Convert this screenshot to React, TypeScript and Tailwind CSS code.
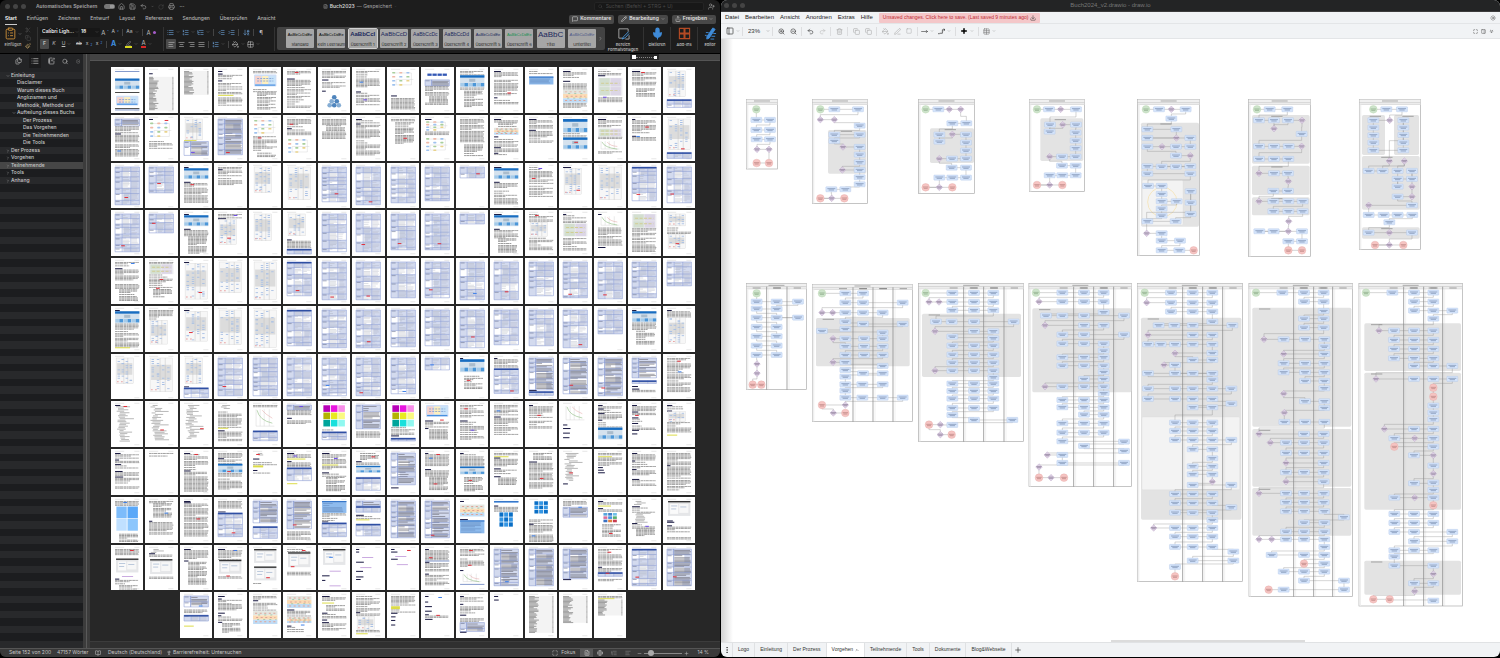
import type { ReactNode } from "react";
import {
  AlignCenter,
  AlignJustify,
  AlignLeft,
  AlignRight,
  ArrowDownAZ,
  BookOpen,
  ChevronDown,
  ChevronRight,
  ChevronUp,
  ChevronsDown,
  CircleX,
  ClipboardList,
  Copy,
  Download,
  EllipsisVertical,
  FileText,
  Files,
  Globe,
  Grid2X2,
  Home,
  IndentDecrease,
  IndentIncrease,
  List,
  ListOrdered,
  ListTree,
  Maximize,
  MessageSquare,
  Mic,
  Minus,
  MoveRight,
  NotebookPen,
  PaintBucket,
  Paintbrush,
  PanelLeft,
  PanelRight,
  Pencil,
  PenLine,
  PersonStanding,
  Plus,
  Printer,
  Redo2,
  RotateCw,
  Save,
  Scissors,
  Search,
  Share,
  Square,
  Sun,
  Table,
  Trash2,
  Undo2,
  UserPlus,
  ZoomIn,
  ZoomOut,
} from "lucide-react";

/* ---------- document pages ---------- */

// One string per page. Each token is a block kind and its height.
const PAGE_ROWS: string[][] = [
  [
    "a1 g6 b11 g2 k1 g2 e10 g2 k1 a1",
    "g2 h1 g2 c34",
    "c24",
    "h1 g1 h1 t4 g1 h1 g1 t4 g1 t6 y1 g1 t8",
    "t2 g1 e12 g2 t3 i17",
    "t5 r g2 h1 t28",
    "t7 g1 h1 g1 t6 g2 h1 g3 z12",
    "t18 u g2 h1 t12 v",
    "f17 g7 h1 g1 t12",
    "g2 A3 g3 D6 t10 i6 t3",
    "t4 b12 t3 i16",
    "h1 t6 g1 t16 r g1 h1 g1 t4",
    "t3 g2 Q8",
    "h1 t7 g1 h1 g1 t6 o13 t5",
    "t4 h1 g1 n18 g1 t5 v",
    "h1 t8 r g1 t4 g2 i8",
    "s26 g2 H8",
  ],
  [
    "D7 t7 h1 t8 g1 t12 u",
    "h1 r g1 f18 g1 t8",
    "s21 y1 D14 v",
    "D36 r",
    "f17 t10 r t6 i4",
    "t9 h1 r t6 g2 f17",
    "t6 i6 t8",
    "h1 t3 h1 t14 g1 t15",
    "t3 i22 r",
    "h1 f11 t4 g1 f16",
    "t24 g1 i12",
    "h1 t2 i5 o7 g1 h1 g1 t8 h1 t4 h1 t2",
    "h1 t8 g1 h1 t12",
    "b14 t4 b12 r",
    "h1 t8 n8 t3 x11 t3",
    "h1 t14 r g1 h1 t4 u",
    "s31 g2 H6 r",
  ],
  [
    "T38 r",
    "T26 r",
    "h1 b11 g2 h1 t6 r t14",
    "t2 h1 t6 g1 t8",
    "s26",
    "s33",
    "T35 r",
    "T38 r",
    "T36",
    "T34",
    "T11 r",
    "h1 b11 g2 h1 t6 g1 t14",
    "t5 v t12 r g1 t12",
    "h1 s26 r",
    "s33",
    "H34 r",
    "T36 r",
    "T38",
  ],
  [
    "T38 r",
    "T19 r",
    "h1 b11 g2 h1 t6 i18",
    "t4 v h1 s25 r",
    "s27",
    "s22 g3 h1 t8 H5",
    "T38",
    "T38 r",
    "T36 r",
    "T36 r",
    "T10",
    "h1 b11 g2 h1 t8 i14",
    "t8 r s14 g1 t13",
    "h1 t8 n13 g1 t12",
    "h1 x12 t18 g1 h1",
    "n14 t8 g1 t14",
    "s12 g1 t7 s14 r",
  ],
  [
    "t6 u h1 t12 g2 t5 i12",
    "t2 n10 t8 r t6 i9 r",
    "h1 s36 r",
    "s31",
    "s38",
    "H34 r",
    "T38 r",
    "T38 r",
    "T36",
    "T36 r",
    "T38 u",
    "T38 r",
    "T34",
    "T36 r",
    "T37 r",
    "T36",
    "T24",
  ],
  [
    "h1 b12 t6 g1 t16 y1",
    "t10 s24",
    "h1 s30 r",
    "s35",
    "s38",
    "H36",
    "T38",
    "T38 r",
    "T37",
    "T36",
    "T38 r",
    "T35",
    "T36",
    "T38 r",
    "T24",
    "h1 b11 t8 i14",
    "h1 t6 s26",
  ],
  [
    "s26",
    "s34",
    "s26 g2 h1 H10",
    "T38 r",
    "T38",
    "T38",
    "T38 u",
    "T38 r",
    "T36 u",
    "T12 u",
    "h1 b13 g3 i14 r",
    "h1 t9 H25 r",
    "D32 h1 H4",
    "D36 r",
    "D38 r",
    "D20 g2 H3 g2 h1 g1 h1 t3",
    "t12 r t10 u t12",
  ],
  [
    "h1 r l36",
    "l36 r",
    "l34 r",
    "l4 g2 t16 y1 g1 h1 t10",
    "t3 x20 g2 H10",
    "D5 t5 v g2 h1 g1 t4",
    "m22 g2 t2 H8",
    "D24 g2 t6",
    "m22 t8 h1 g1 H3",
    "e12 g3 h1 t6 r h1 i10",
    "t14 r g1 h1 t18 v",
    "t10 u g1 h1 t18",
    "h1 t12 r g2 t8",
    "x17 g2 h1 g2 h1 g3 h1 g3 h1",
    "h1 t2 h1 t3 h1 t5 h1 g1 t5 b12",
    "h1 t5 h1 t3 g1 h1 t4 r h1 g1 t4 h1 g2 h1",
    "h1 t4 h1 s10 t10 g2 y1",
  ],
  [
    "h1 t5 h1 t3 h1 t3 g2 h1 t4 h1 t6 g2 t2",
    "t1 g1 t1",
    "h1 r t16 h1 t20",
    "t5 h1 t4 b9 t4 r g1 t12",
    "l3 r g2 h1 g2 t3 y2 g2 h1 g1 t2",
    "h1 t4 y1 g1 h1 v t5 H13 g2 y1",
    "h1 t10 v y1 t5 g1 h1 t3 i14",
    "i8 r h1 t3 b7 g4 H13",
    "D32 g2 h1",
    "h1 t8 r t4 u g2 h1 t6 i14 r",
    "h1 t12 b8 g2 i14 r",
    "t3 y1 h1 t8 g1 h1 t4 g2 h1 i8",
    "i7 g1 h1 t18 r g1 t6",
    "l28 r g2 h1",
    "t3 y1 t8 g1 h1 g1 h1 g1 h1",
    "h1 t6 h1 t7 h1 t6 g2 h1 t6",
    "t12 h1 t12 g1 t10",
  ],
  [
    "t5 u q25 g2 i8",
    "t2 i15 u g2 h1 t4 t8",
    "h1 h1 t18 r g1 t14",
    "t8 g2 h1 H24 r",
    "D22 g3 H12",
    "D28 r g2 t8",
    "Q12 t8 h1 H14",
    "D5 H6 g2 h1 t3 y1 g3 H12",
    "D37",
    "D37 r",
    "h1 g2 o12 g2 h1 Q13",
    "Q2 g2 h1 t5 q15",
    "q13 g5 t4 h1 t8 g1 t7 u",
    "t6 D10 u",
    "h1 t3 y1 g1 h1 t3 d10 g1 i12 r",
    "l5 h1 t5 l10 h1 t4 i8 v",
    "w15 g4 h1 h1 g2 h1 t6 g4 t3",
  ],
  [
    "t7 r g2 w14 g3 p1 g1 h1 t5 i5",
    "l4 h1 t2 g2 w15 g2 t2",
    "h1 t10 h1 i23",
    "h1 r t5 u t4 w14 g2 t3 r",
    "w14 g3 w14 g2 t2 r",
    "t3 r w15 g4 t4 r",
    "w16 g3 u g2 p1 g3 h1 g3 h1 g4 p1",
    "h1 g1 h1 g4 p1 g3 h1 g4 p1 g2 h1 g4 h1 g1 h1",
    "h1 g1 h1 r g3 p1 g1 h1 g4 p1",
    "h1 t10 a1 h1 r t8 g2 h1 t10",
    "t8 r g1 t9 r g2 h1 g1 x11 a1",
    "D37 u",
    "D37",
    "D30 h1",
    "t8 r t8 g1 h1 t4 H4 g2 t3 r",
    "H37 r",
    "D37 r",
  ],
  [
    "D11 g2 t4 u g1 H6 g4 y1",
    "h1 g1 h1 t4 t6 g2 h1 g1 h1 t5 h1 i10",
    "t4 h1 g1 t8 o13",
    "o12 g1 h1 t6 o6 g2 h1 t6 u",
    "h1 t5 y1 g1 i6 g1 h1 t4 g1 h1 g1 h1 t8",
    "t16 h1 t3 s13 t3 y1",
    "t10 y3 t3 h1 g2 h1 g2 h1 g3 h1",
    "h1 g4 h1 u g3 h1 g3 h1 g2 h1 t3 r h1",
    "h1 t4 g2 h1 g1 t8 h1 g2 t4 D9 h1",
    "h1 g2 h1",
    "c37",
    "c27",
    "t2 y1 c16",
  ],
];

function random(seed: number) {
  let s = seed * 7919 + 13;
  return () => {
    s = (s * 16807) % 2147483647;
    return s / 2147483647;
  };
}

function textLines(x: number, y: number, w: number, h: number, rnd: () => number) {
  let d = "";
  let ly = y + 0.5;
  while (ly < y + h) {
    const last = rnd() > 0.78;
    const end = last ? w * (0.3 + rnd() * 0.5) : w - rnd() * 1.5;
    d += `M${x} ${ly.toFixed(2)}h${end.toFixed(1)}`;
    ly += last ? 2.1 : 1.3;
  }
  return d;
}

const PASTELS = ["#a9cf9c", "#9fc2ee", "#e9d38c", "#9fc2ee", "#f0b9a8"];
const BRIGHTS = ["#b800b8", "#e815e0", "#f78ee8", "#b3b300", "#e8ea20", "#fafa80", "#00a59b", "#18e0dc", "#90f8f0"];
const DOTS = ["#57a6dd", "#3f7fc8", "#6fc0e8", "#d86f9c", "#4690e0", "#58b070", "#3a70c0", "#e08040", "#c83c50"];

function block(kind: string, y: number, h: number, rnd: () => number, key: number): ReactNode {
  const cells = (cols: number, rows: number, pick: (i: number) => string, x = 5, w = 22) =>
    Array.from({ length: cols * rows }, (_, i) => (
      <rect
        key={i}
        x={x + (i % cols) * (w / cols) + 0.3}
        y={y + Math.floor(i / cols) * (h / rows) + 0.3}
        width={w / cols - 0.8}
        height={h / rows - 0.7}
        fill={pick(i)}
      />
    ));

  switch (kind) {
    case "t":
      return <path key={key} d={textLines(4, y, 24, h, rnd)} stroke="#6f6f6f" strokeWidth=".65" strokeDasharray="2.600 .4 1.500 .3 3.200 .5" />;
    case "i":
      return <path key={key} d={textLines(8, y, 19, h, rnd)} stroke="#666" strokeWidth=".65" strokeDasharray="1.800 .4 3 .4" />;
    case "l": {
      let d = "";
      for (let ly = y + 0.5; ly < y + h; ly += 1.5) {
        d += `M${(5 + rnd() * 5).toFixed(1)} ${ly}h${(4 + rnd() * 10).toFixed(1)}`;
      }
      return <path key={key} d={d} stroke="#888" strokeWidth=".6" />;
    }
    case "c": {
      let d = "";
      for (let ly = y + 0.5; ly < y + h; ly += 1.25) d += `M4 ${ly.toFixed(2)}h${(4 + rnd() * 6).toFixed(1)}M27 ${ly.toFixed(2)}h1`;
      return (
        <g key={key}>
          <rect x="4" y={y} width="24" height={h} fill="#f3f3f3" />
          <path d={d} stroke="#666" strokeWidth=".6" />
        </g>
      );
    }
    case "h":
      return <rect key={key} x="4" y={y} width={3 + rnd() * 5} height="1" fill="#16163f" />;
    case "k":
      return <rect key={key} x="4" y={y} width="24" height=".9" fill="#333" />;
    case "a":
      return <rect key={key} x="4" y={y} width="24" height="1" fill="#8399cb" />;
    case "p":
      return <rect key={key} x={8 + rnd() * 4} y={y} width="11" height=".8" fill="#bd95d8" />;
    case "y":
      return <rect key={key} x="4" y={y} width={8 + rnd() * 12} height={h} fill="#dcdc48" />;
    case "A":
      return <g key={key}>{cells(4, 1, () => "#3257b5", 6, 20)}</g>;
    case "b":
      return (
        <g key={key}>
          <rect x="4" y={y} width="24" height={h} fill="#d5e2ee" />
          <rect x="4" y={y} width="24" height={h * 0.2} fill="#186dc1" />
          <rect x="13" y={y + h * 0.3} width="6" height={h * 0.25} fill="#aabccc" />
          {[0, 1, 2, 3, 4, 5].map((i) => (
            <rect key={i} x={4.3 + i * 4} y={y + h * 0.65} width="3.5" height={h * 0.28} fill={i % 2 ? "#4c97d8" : "#a5cbea"} />
          ))}
        </g>
      );
    case "e":
      return (
        <g key={key}>
          <rect x="5" y={y} width="22" height={h} rx="1" fill="#cfdff7" />
          {["#f6d3cd", "#fff0bd", "#c8e4fa"].map((c, i) => (
            <rect key={c} x={6 + i * 7} y={y + 1.5} width="6" height={h - 4} fill={c} />
          ))}
          <path d={`M8 ${y + 4}h16M8 ${y + 6.5}h16`} stroke="#7a9ad0" strokeDasharray="2 1" strokeWidth=".8" />
          <rect x="6" y={y + h - 2} width="20" height="1.2" fill="#4690e0" />
        </g>
      );
    case "z":
      return (
        <g key={key}>
          {[[16, 2], [13.5, 6], [18.5, 6], [11.5, 10], [16, 10], [20.5, 10]].map(([cx, cy], i) => (
            <circle key={i} cx={cx} cy={y + cy} r="2.3" fill={i % 2 ? "#85add4" : "#4f85bd"} />
          ))}
        </g>
      );
    case "f":
      return (
        <g key={key}>
          <path d={`M7 ${y + 2}H24V${y + h - 3}H9V${y + h / 2}H26`} stroke="#cfcfcf" strokeWidth=".4" />
          {Array.from({ length: 11 }, (_, i) => (
            <rect
              key={i}
              x={5 + ((i * 7) % 21)}
              y={y + 1 + (i % 4) * (h / 4.2)}
              width="3.2"
              height="1.6"
              rx=".7"
              fill={PASTELS[i % 5]}
            />
          ))}
        </g>
      );
    case "s": {
      const w = h > 28 ? 22 : 17;
      return (
        <g key={key}>
          <rect x="5" y={y} width={w} height={h} fill="#f7f7f7" stroke="#c9c9c9" strokeWidth=".3" />
          <rect x="6" y={y + h * 0.2} width={w - 2} height={h * 0.45} fill="#dcdcdc" />
          <path d={`M${5 + w * 0.45} ${y}v${h}M${5 + w * 0.68} ${y}v${h}`} stroke="#bbb" strokeWidth=".4" />
          {Array.from({ length: Math.floor(h * 0.9) }, (_, i) => (
            <rect
              key={i}
              x={6.5 + Math.floor(rnd() * 4) * (w / 4.3)}
              y={y + 1 + Math.floor(i / 2) * 2.1}
              width="2.4"
              height=".9"
              fill="#a9c0e4"
            />
          ))}
          <path d={`M6 ${y + h - 2}h1.500M10 ${y + h - 2}h1.500`} stroke="#e79a9a" strokeWidth="1" />
        </g>
      );
    }
    case "n":
      return (
        <g key={key}>
          <rect x="4" y={y} width="24" height={h} fill="#ececf0" />
          {cells(2, 2, (i) => (i % 2 ? "#dcd6e6" : "#d3dfd0"), 5, 22)}
          <path d={`M7 ${y + h * 0.3}h18M7 ${y + h * 0.7}h18`} stroke="#d2cd92" strokeDasharray="3 1.400" />
        </g>
      );
    case "o":
      return (
        <g key={key}>
          {["#e3e6e0", "#fbdcb6", "#bfdcf6"].map((c, i) => (
            <rect key={c} x="4" y={y + (i * h) / 3} width="24" height={h / 3} fill={c} />
          ))}
          <path d={`M6 ${y + h * 0.17}h20M7 ${y + h * 0.5}h19M6 ${y + h * 0.83}h20`} stroke="#dfa396" strokeDasharray="2 2.500" />
          <path d={`M9 ${y + h * 0.3}h17M8 ${y + h * 0.65}h19`} stroke="#98c4a3" strokeDasharray="2 4" strokeWidth=".8" />
        </g>
      );
    case "x":
      return (
        <g key={key}>
          <path d={`M7 ${y + 1}v${h - 3}h18M11 ${y + 1}v${h - 3}M15 ${y + 1}v${h - 3}M20 ${y + 1}v${h - 3}`} stroke="#ccc" strokeWidth=".4" />
          <path d={`M8 ${y + 2}q2 ${h * 0.5} 15 ${h * 0.65}`} stroke="#8fbe84" strokeWidth=".6" />
          <path d={`M13 ${y + 2}q3 4 10 ${h * 0.4}`} stroke="#e3a3a3" strokeWidth=".5" />
        </g>
      );
    case "m":
      return <g key={key}>{cells(3, 3, (i) => BRIGHTS[i])}</g>;
    case "d":
      return <g key={key}>{cells(3, 3, (i) => DOTS[i], 9, 14)}</g>;
    case "q":
      return (
        <g key={key}>
          {h > 20
            ? cells(2, 2, (i) => ["#7dbcfb", "#5aa8f8", "#c0e0ff", "#8cc6fc"][i])
            : cells(3, 3, (i) => (i % 2 ? "#3496e4" : "#0a6fc6"), 9, 14)}
        </g>
      );
    case "w":
      return (
        <g key={key}>
          <rect x="5" y={y} width="22" height={h} fill="#e5e6e8" />
          <rect x="5" y={y} width="22" height="1.4" fill="#333" />
          <rect x="7" y={y + 3} width="8" height={h - 5} fill="#fafafa" />
          <rect x="16" y={y + 3} width="9" height={h - 6} fill="#f7f7f7" />
          <path d={`M8 ${y + 5}h6M17 ${y + 6}h6M8 ${y + 8}h5`} stroke="#9fb3cf" strokeWidth=".7" />
        </g>
      );
    case "Q":
      return (
        <g key={key}>
          <rect x="4" y={y} width="24" height={h} fill="#8ebbed" />
          <rect x="4" y={y} width="24" height="1.2" fill="#3676c8" />
          <path d={textLines(5, y + 2, 20, h - 3, rnd)} stroke="#5377a8" strokeWidth=".4" />
        </g>
      );
    case "T":
    case "D":
    case "H": {
      const dense = kind === "D";
      const c1 = dense ? 10.5 : 11;
      const c2 = dense ? 10.5 : 19.5;
      const rows: number[] = [y];
      for (let ry = y + 4 + rnd() * 3; ry < y + h - 2; ry += 3.5 + rnd() * 5) rows.push(ry);
      return (
        <g key={key}>
          <rect x="4" y={y} width="24" height={h} fill="#d3daee" />
          {rows.map((ry, i) => {
            if (i % 2 === 0) return null;
            const next = rows[i + 1] ?? y + h;
            return <rect key={ry} x={rnd() > 0.5 ? 4 : c1} y={ry} width={rnd() > 0.4 ? 17 : 8.5} height={next - ry} fill="#fff" />;
          })}
          <path
            d={textLines(c1 + 0.6, y + 1, dense ? 16.5 : 7.5, h - 1.5, rnd)}
            stroke={dense ? "#65656f" : "#a9adbb"}
            strokeWidth={dense ? ".6" : ".4"}
          />
          {!dense && <path d={textLines(c2 + 0.6, y + 1, 7, h - 1.5, rnd)} stroke="#b4b7c5" strokeWidth=".4" />}
          <path
            d={rows.map((ry) => `M4 ${ry}h24`).join("") + `M${c1} ${y}v${h}M${c2} ${y}v${h}M4 ${y + h}h24M4 ${y}v${h}M28 ${y}v${h}`}
            stroke="#8496d0"
            strokeWidth=".5"
          />
          <path d={rows.map((ry) => `M4.500 ${ry + 1}h4`).join("")} stroke="#6d7796" strokeWidth=".6" />
          {kind === "H" && <rect x="4" y={y} width="24" height="1.5" fill="#2f4fa3" />}
        </g>
      );
    }
    default:
      return null;
  }
}

const MARKS: Record<string, string> = { r: "#e0303a", u: "#3d80ea", v: "#6d4be8" };

function PageThumb({ spec, index }: { spec: string; index: number }) {
  const rnd = random(index + 1);
  let y = 4;
  const blocks: ReactNode[] = [];
  const marks: ReactNode[] = [];

  spec.split(" ").forEach((token, i) => {
    const kind = token[0];
    const h = Number(token.slice(1)) || 0;
    if (MARKS[kind]) {
      const my = Math.max(5, y - 3 - rnd() * 9);
      marks.push(<rect key={i} x={6 + rnd() * 14} y={my} width="3.6" height="1" fill={MARKS[kind]} />);
      return;
    }
    blocks.push(block(kind, y, h, rnd, i));
    y += h + 0.3;
  });

  return (
    <svg
      viewBox="0 0 32 46"
      preserveAspectRatio="none"
      className="h-full w-full min-w-0 bg-white"
      fill="none"
      aria-label={`Seite ${index + 1}`}
    >
      <path d="M4 2.300h9M23 2.300h5M23 44h5" stroke="#d5d5d5" strokeWidth=".6" />
      {blocks}
      {marks}
    </svg>
  );
}

/* ---------- draw.io diagrams ---------- */

interface Diagram {
  // canvas offset
  offset: [number, number];
  // x1 y1 x2 y2
  frame: [number, number, number, number];
  lanes?: number[];
  groups?: number[][];
  light?: number[][];
  ring?: boolean;
  // plain pairs are process boxes; g = start, d = decision, r = end
  nodes: string;
}

// Coordinates are in a third of a canvas pixel.
const DIAGRAMS: Diagram[] = [
  {
    offset: [-3, -114],
    frame: [79, 295, 173, 504],
    nodes: "g109,325 109,357 150,357 109,387 150,387 110,415 150,415 d111,445 d147,445 r147,486 r110,486",
  },
  {
    offset: [-3, -114],
    frame: [277, 295, 443, 608],
    groups: [[324, 387, 115, 131]],
    nodes:
      "g301,325 343,325 414,325 d301,356 d343,356 419,374 343,401 419,401 343,420 d369,438 419,438 419,461 419,484 d367,507 419,507 419,529 419,550 376,565 334,565 d335,592 r301,592 r373,592",
  },
  {
    offset: [-3, -114],
    frame: [596, 295, 763, 577],
    groups: [[630, 382, 132, 104]],
    nodes:
      "g617,325 655,325 d688,325 d722,325 739,367 697,367 658,401 658,422 d697,400 738,401 738,425 738,449 738,473 696,473 d658,473 695,500 738,500 738,530 697,530 658,530 d658,559 r617,559 r697,559",
  },
  {
    offset: [-3, -114],
    frame: [928, 295, 1094, 572],
    groups: [[961, 352, 129, 128]],
    nodes:
      "g951,325 987,325 d1022,325 1068,325 990,371 989,392 d1028,371 1068,371 1067,395 1067,419 1067,442 1067,467 1026,467 d989,467 1026,494 1067,494 1067,523 1027,523 989,523 d989,552 r951,552 r1027,552",
  },
  {
    offset: [1137, -114],
    frame: [113, 295, 299, 764],
    groups: [[123, 365, 174, 312]],
    light: [[127, 537, 122, 135]],
    ring: true,
    nodes:
      "g138,325 177,325 d214,325 257,325 214,353 142,385 229,385 d229,411 142,411 271,411 271,437 228,437 d186,437 142,437 228,464 d271,464 185,497 228,497 271,496 142,496 142,518 271,518 144,555 185,555 185,579 185,601 230,601 185,623 185,644 142,661 227,661 272,639 272,605 272,571 d140,697 185,697 185,719 240,719 185,748 238,748 r281,748",
  },
  {
    offset: [1137, -114],
    frame: [446, 295, 632, 767],
    groups: [[456, 342, 173, 146], [456, 494, 173, 88], [456, 589, 173, 54]],
    nodes:
      "g471,325 509,325 562,325 477,358 522,358 d522,383 564,358 d606,358 605,399 477,436 522,436 566,436 d605,436 477,474 522,474 565,474 d477,517 522,517 564,517 d565,541 564,570 520,570 d477,601 520,601 565,601 608,601 520,631 565,631 608,631 d566,661 d565,691 521,691 478,691 606,691 606,721 565,721 r565,748 r606,748",
  },
  {
    offset: [1137, -114],
    frame: [778, 295, 962, 746],
    groups: [[786, 342, 69, 120], [882, 342, 75, 120], [786, 465, 173, 161], [786, 679, 173, 34]],
    nodes:
      "g820,325 859,325 906,325 d869,358 820,358 820,380 820,403 820,425 820,448 910,448 910,425 910,402 910,380 910,358 d868,480 806,510 848,510 d913,480 893,510 893,534 893,557 936,510 936,534 d936,557 d936,587 893,587 936,613 d806,613 806,642 851,642 893,642 937,642 868,664 806,695 d868,695 936,695 d868,732 r825,732 r910,732",
  },
  {
    offset: [-3, 696],
    frame: [79, 38, 260, 356],
    lanes: [140, 201],
    nodes:
      "g110,67 110,92 170,92 234,92 170,114 110,113 170,140 234,140 110,140 170,168 110,168 170,196 110,196 170,224 110,224 170,252 110,252 d111,279 d111,307 r98,341 r124,341",
  },
  {
    offset: [-3, 696],
    frame: [277, 40, 578, 452],
    lanes: [399, 459, 519],
    groups: [[288, 141, 281, 145]],
    nodes:
      "g306,67 376,67 429,67 376,95 429,95 548,95 d306,125 d338,125 376,125 429,125 488,125 376,152 429,159 548,159 376,174 306,180 488,185 488,203 432,203 376,203 d339,203 376,226 432,226 488,226 376,252 432,252 488,252 d339,274 376,274 488,285 376,297 429,307 488,307 376,317 376,340 427,340 488,340 376,359 376,380 427,380 488,380 548,380 d376,402 r306,402 d340,426 r376,426",
  },
  {
    offset: [-3, 696],
    frame: [596, 38, 911, 512],
    lanes: [731, 791, 852],
    groups: [[606, 128, 297, 190]],
    nodes:
      "g617,66 697,66 762,66 820,66 d627,93 d657,93 697,93 762,93 820,93 697,118 762,118 820,118 648,152 695,152 762,152 881,152 d645,181 762,181 820,181 697,197 820,202 697,224 762,224 820,224 697,251 762,251 820,251 697,275 762,275 820,275 d645,299 697,299 762,299 820,299 820,319 697,338 762,338 820,338 697,360 762,360 820,360 697,383 762,383 820,383 697,411 762,411 820,411 697,432 762,447 877,447 697,462 d661,461 r627,461 d661,491 r695,491",
  },
  {
    offset: [297, 696],
    frame: [627, 38, 935, 647],
    lanes: [761, 821, 881],
    groups: [[637, 112, 297, 252]],
    nodes:
      "g648,65 727,65 792,65 851,65 d657,92 727,92 792,92 851,92 851,124 678,134 727,134 792,134 912,134 d675,163 792,163 851,163 727,191 792,191 912,191 727,218 792,218 851,218 851,239 727,259 792,259 851,259 727,284 792,284 851,284 851,303 792,324 851,324 d675,347 727,347 792,347 851,347 851,367 727,387 792,387 851,387 727,409 792,409 851,409 792,431 851,431 727,457 792,457 851,457 727,485 792,485 851,485 727,511 912,512 792,525 912,540 d682,552 727,552 727,576 912,576 d657,588 r657,620 d693,620 r732,620",
  },
  {
    offset: [297, 696],
    frame: [952, 38, 1267, 932],
    lanes: [1088, 1148, 1208],
    groups: [[963, 140, 301, 606]],
    light: [[966, 438, 293, 218]],
    nodes:
      "g974,65 1053,65 1118,65 1177,65 d980,95 1053,95 1118,95 1177,95 1053,122 1118,122 1177,122 1177,152 1016,163 1063,163 1118,163 1237,163 d984,192 1118,192 1177,192 984,220 1022,220 1065,220 1118,220 1177,220 1177,246 d1065,247 1118,267 1177,267 d1032,282 1065,282 1065,307 1118,307 1177,307 984,307 1177,326 984,353 1065,353 1118,353 1177,353 1234,353 984,384 1065,384 1118,384 1177,384 1234,398 1118,409 1177,409 1065,455 1118,455 1177,455 1065,480 1118,480 1177,480 1065,507 1118,507 1177,507 1234,507 1118,535 1177,535 1177,562 1118,586 1177,586 1118,610 1177,610 d1177,632 1118,642 1234,642 1065,669 1118,669 1177,669 1065,696 1118,696 1177,696 1234,709 1065,725 1118,725 1177,725 1177,747 d1001,771 1065,771 1118,771 1177,771 1065,797 1118,797 1177,797 1065,828 1118,828 1177,828 1240,842 1118,869 1240,869 1065,888 r1065,916",
  },
  {
    offset: [1557, 696],
    frame: [27, 38, 338, 977],
    lanes: [161, 221, 278],
    groups: [[37, 110, 297, 357], [37, 474, 297, 173], [37, 651, 297, 143]],
    nodes:
      "g48,65 127,65 192,65 251,65 192,92 251,92 251,120 192,143 251,143 192,170 251,170 d72,205 131,205 195,205 253,205 253,227 d131,249 253,249 131,277 195,277 253,277 131,304 195,304 253,304 195,330 253,330 253,352 d131,368 195,391 253,391 253,411 d133,425 133,453 195,453 253,453 d57,489 192,489 251,489 d91,515 138,515 192,515 251,515 138,546 192,546 251,546 d138,576 251,576 138,604 192,604 251,604 d138,632 251,632 d57,667 138,667 192,667 251,667 138,694 192,694 251,694 138,721 192,721 253,721 312,739 192,755 253,755 138,782 192,782 253,782 d57,805 d95,805 138,805 192,805 253,805 253,828 95,852 192,852 253,852 r192,878 253,878 131,902 192,902 253,902 192,929 312,929 312,956 131,956 r86,956",
  },
  {
    offset: [1557, 696],
    frame: [357, 38, 667, 1005],
    lanes: [491, 551, 608],
    groups: [[373, 157, 290, 143], [373, 305, 290, 411], [373, 869, 290, 102]],
    nodes:
      "g378,65 457,65 522,65 580,65 522,92 580,92 522,119 580,119 637,119 580,143 d417,179 462,179 522,179 580,179 462,207 522,207 580,207 462,234 522,234 580,234 462,262 522,262 580,262 522,285 580,285 637,285 d408,324 522,324 580,324 637,324 r580,350 r580,377 580,404 580,425 580,445 d433,474 522,474 580,474 463,502 d524,502 580,502 r463,527 580,527 522,553 d580,553 580,584 d580,608 522,637 580,635 580,657 463,680 d524,680 580,680 r580,703 463,729 522,729 580,729 463,756 522,756 580,756 463,783 522,783 637,783 522,811 637,811 463,838 522,838 580,838 463,857 463,884 580,884 d580,909 522,937 580,937 d524,961 r400,985 r449,985 580,989",
  },
];

function DiagramSheet({ diagram }: { diagram: Diagram }) {
  const [x1, y1, x2, y2] = diagram.frame;
  const [tx, ty] = diagram.offset;
  const w = x2 - x1;
  const nodes = diagram.nodes.split(" ").map((n) => {
    const kind = /^[gdr]/.test(n) ? n[0] : "b";
    const [x, y] = n.replace(/^[gdr]/, "").split(",").map(Number);
    return { kind, x, y };
  });
  const edges = nodes
    .slice(1)
    .map((n, i) => {
      const p = nodes[i];
      if (Math.abs(p.y - n.y) < 4) return `M${p.x} ${p.y}H${n.x}`;
      const mid = Math.round((p.y + n.y) / 2);
      return `M${p.x} ${p.y}V${mid}H${n.x}V${n.y}`;
    })
    .join("");

  return (
    <g transform={`scale(.33333) translate(${tx} ${ty})`}>
      <rect x={x1} y={y1} width={w} height={y2 - y1} fill="#fff" stroke="#a8a8a8" strokeWidth="2" />
      <rect x={x1} y={y1} width={w} height="9" fill="#f0f0f0" stroke="#bbb" />
      <rect x={x1} y={y1 + 9} width={w} height="7" fill="#ececec" stroke="#bbb" />
      <rect x={x1 + 1} y={y1 + 16} width="5" height={y2 - y1 - 17} fill="#efefef" />
      <path d={`M${x1 + w / 2 - 24} ${y1 + 5}h48`} stroke="#888" strokeWidth="2" />
      {diagram.groups?.map((g, i) => (
        <g key={i}>
          <rect x={g[0]} y={g[1]} width={g[2]} height={g[3]} rx="5" fill="#e3e3e3" />
          <path d={`M${g[0] + (g[2] > 200 ? 20 : g[2] / 3)} ${g[1] + 4}h34`} stroke="#777" strokeWidth="1.8" />
        </g>
      ))}
      {diagram.light?.map((g, i) => (
        <rect key={i} x={g[0]} y={g[1]} width={g[2]} height={g[3]} rx="4" fill="#f3f3f3" stroke="#ddd" />
      ))}
      {diagram.lanes?.map((lane) => (
        <g key={lane}>
          <path d={`M${lane + 6} ${y1 + 14}V${y2}`} stroke="#d8d8d8" strokeWidth="1" />
          <path d={`M${lane} ${y1 + 9}V${y2}`} stroke="#858585" strokeWidth="2.2" />
          <path d={`M${lane - 42} ${y1 + 13}h24M${lane + 20} ${y1 + 13}h22`} stroke="#777" strokeWidth="2" />
        </g>
      ))}
      {diagram.ring && <circle cx="187" cy="603" r="44" stroke="#f5e6c0" strokeWidth="3" />}
      <path d={edges} stroke="#8a8a8a" strokeWidth="1.1" />
      {nodes.map((n, i) => {
        if (n.kind === "d") {
          return (
            <g key={i}>
              <path d={`M${n.x} ${n.y - 10}l10 10l-10 10l-10-10z`} fill="#dccfe4" stroke="#b29abf" />
              <path d={`M${n.x - 8} ${n.y - 1.5}h16M${n.x - 6} ${n.y + 2}h12`} stroke="#6d5c78" strokeWidth="1.4" />
            </g>
          );
        }
        if (n.kind !== "b") {
          const green = n.kind === "g";
          return (
            <g key={i}>
              <circle cx={n.x} cy={n.y} r="11.5" fill={green ? "#cde3cb" : "#f6c4c2"} stroke={green ? "#b4d3a8" : "#e2a5a2"} />
              <path d={`M${n.x - 8} ${n.y - 1}h16M${n.x - 6} ${n.y + 3}h12`} stroke={green ? "#6f946a" : "#a06766"} strokeWidth="1.5" />
            </g>
          );
        }
        return (
          <g key={i}>
            <rect x={n.x - 16.5} y={n.y - 8} width="33" height="15.5" rx="2" fill="#d4e4fb" stroke="#a3bce2" strokeWidth=".9" />
            <path d={`M${n.x - 12} ${n.y - 2}h24M${n.x - 8} ${n.y + 2}h16`} stroke="#526a8e" strokeWidth="1.5" />
          </g>
        );
      })}
    </g>
  );
}

/* ---------- word processor ---------- */

const RIBBON_TABS = ["Start", "Einfügen", "Zeichnen", "Entwurf", "Layout", "Referenzen", "Sendungen", "Überprüfen", "Ansicht"];

const STYLES = [
  { name: "Standard", sample: "AaBbCcDdEe", cls: "text-[4px] text-black" },
  { name: "Kein Leerraum", sample: "AaBbCcDdEe", cls: "text-[4px] text-black" },
  { name: "Überschrift 1", sample: "AaBbCcI", cls: "text-[6px] font-bold text-[#20285c]" },
  { name: "Überschrift 2", sample: "AaBbCcD", cls: "text-[6px] text-[#20285c]" },
  { name: "Überschrift 3", sample: "AaBbCcDc", cls: "text-[5px] text-[#20285c]" },
  { name: "Überschrift 4", sample: "AaBbCcDd", cls: "text-[5px] text-[#20285c]" },
  { name: "Überschrift 5", sample: "AaBbCcDdEe", cls: "text-[4px] text-[#20285c]" },
  { name: "Überschrift 6", sample: "AaBbCcDdEe", cls: "text-[4px] text-[#1c8f50]" },
  { name: "Titel", sample: "AaBbC", cls: "text-[8px] text-[#20285c]" },
  { name: "Untertitel", sample: "AaBbCcDdEe", cls: "text-[4px] italic text-[#4a5588]" },
];

const OUTLINE: { label: string; level: number; open?: boolean; closed?: boolean }[] = [
  { label: "Einleitung", level: 0, open: true },
  { label: "Disclaimer", level: 1 },
  { label: "Warum dieses Buch", level: 1 },
  { label: "Anglizismen und", level: 1 },
  { label: "Methodik, Methode und", level: 1 },
  { label: "Aufteilung dieses Buchs", level: 1, open: true },
  { label: "Der Prozess", level: 2 },
  { label: "Das Vorgehen", level: 2 },
  { label: "Die Teilnehmenden", level: 2 },
  { label: "Die Tools", level: 2 },
  { label: "Der Prozess", level: 0, closed: true },
  { label: "Vorgehen", level: 0, closed: true },
  { label: "Teilnehmende", level: 0, closed: true },
  { label: "Tools", level: 0, closed: true },
  { label: "Anhang", level: 0, closed: true },
];

const LEVEL_PAD = ["pl-[6px]", "pl-[12px]", "pl-[18px]"];

function Lights({ className }: { className: string }) {
  return (
    <div className={`flex items-center gap-[3px] ${className}`}>
      <span className="size-[5px] rounded-full bg-[#444]" />
      <span className="size-[5px] rounded-full bg-[#444]" />
      <span className="size-[5px] rounded-full bg-[#444]" />
    </div>
  );
}

function Tool({ label, className = "w-[10px]", menu, children }: { label: string; className?: string; menu?: boolean; children: ReactNode }) {
  return (
    <button aria-label={label} className={`flex h-[10px] shrink-0 items-center justify-center gap-[2px] ${className}`}>
      {children}
      {menu && <ChevronDown className="size-[4px] text-[#8a8a8a]" />}
    </button>
  );
}

function Divider({ className = "h-[7px] bg-[#444]" }: { className?: string }) {
  return <span className={`mx-[2px] w-px shrink-0 ${className}`} />;
}

function WordTitleBar() {
  return (
    <div className="flex h-[13px] items-center text-[5px] text-[#a0a0a0]">
      <Lights className="ml-[5px] w-[31px]" />
      <label className="flex items-center gap-[7px] font-['Liberation_Sans',sans-serif] font-bold">
        Automatisches Speichern
        <input
          type="checkbox"
          className="h-[5px] w-[11px] appearance-none rounded-full bg-[#777] [background-image:radial-gradient(circle_at_8px_50%,#999_2px,transparent_2px)]"
        />
      </label>
      <div className="ml-[3px] flex items-center gap-[4px]">
        <Home className="size-[7px]" />
        <Save className="size-[7px]" />
        <Undo2 className="size-[7px]" />
        <ChevronDown className="size-[3px]" />
        <RotateCw className="size-[6px] text-[#4a4a4a]" />
        <Printer className="size-[7px]" />
        <span className="font-bold">···</span>
      </div>
      <div className="ml-auto mr-[197px] flex items-center gap-[2px]">
        <FileText className="size-[5px]" />
        <span className="font-semibold text-[#cfcfcf]">Buch2023</span>
        <span>— Gespeichert</span>
        <ChevronDown className="size-[3px] text-[#555]" />
      </div>
      <label className="mr-[4px] flex w-[110px] items-center gap-[3px] rounded-[2px] border border-[#242424] bg-[#181818] pl-[3px] text-[#484848]">
        <Search className="size-[5px]" />
        <input
          aria-label="Suchen"
          placeholder="Suchen (Befehl + STRG + U)"
          className="h-[7px] w-full bg-transparent p-0 outline-none placeholder:text-[#484848]"
        />
      </label>
      <UserPlus className="mr-[5px] size-[7px]" />
    </div>
  );
}

function RibbonTabs() {
  return (
    <div className="flex h-[12px] items-center pl-[5px] text-[5px] text-[#b4b4b4]">
      <div className="flex gap-[10px]">
        {RIBBON_TABS.map((tab, i) => (
          <button key={tab} className={i === 0 ? "h-[11px] border-b border-[#ccc] font-semibold text-white" : "h-[11px] border-b border-transparent font-medium"}>
            {tab}
          </button>
        ))}
      </div>
      <div className="ml-auto mr-[4px] flex gap-[4px] font-semibold text-[#e2e2e2]">
        <button className="flex h-[9px] items-center gap-[2px] rounded-[2px] bg-[#484848] px-[3px]">
          <MessageSquare className="size-[6px]" />
          Kommentare
        </button>
        <button className="flex h-[9px] items-center gap-[2px] rounded-[2px] bg-[#484848] px-[3px]">
          <Pencil className="size-[6px]" />
          Bearbeitung
          <ChevronDown className="size-[4px]" />
        </button>
        <button className="flex h-[9px] items-center gap-[2px] rounded-[2px] bg-[#484848] px-[3px]">
          <Share className="size-[6px]" />
          Freigeben
          <ChevronDown className="size-[4px]" />
        </button>
      </div>
    </div>
  );
}

function BigTool({ label, className, children }: { label: string; className: string; children: ReactNode }) {
  return (
    <button className={`flex h-[25px] flex-col items-center text-[4px] font-medium leading-[5px] text-[#c8c8c8] ${className}`}>
      {children}
      <span className="mt-[2px]">{label}</span>
    </button>
  );
}

function Ribbon() {
  return (
    <div className="flex h-[29px] items-start border-b border-black pt-[2px] text-[#bdbdbd]">
      <div className="flex w-[35px] pl-[4px]">
        <button className="flex flex-col items-center text-[4px] font-medium leading-[5px]">
          <span className="flex items-center gap-[1px]">
            <ClipboardList className="size-[13px] text-[#d6953a]" strokeWidth={1.6} />
            <ChevronDown className="size-[4px]" />
          </span>
          <span className="mt-[2px]">Einfügen</span>
        </button>
        <div className="ml-[3px] flex flex-col gap-[2px]">
          <Scissors className="size-[6px] text-[#4f4f4f]" />
          <Copy className="size-[6px] text-[#4f4f4f]" />
          <Paintbrush className="size-[6px] text-[#c6a86c]" />
        </div>
      </div>
      <Divider className="h-[24px] bg-[#333]" />

      <div className="flex w-[121px] flex-col gap-[2px] text-[5px]">
        <div className="flex items-center">
          <span className="flex w-[38px] items-center justify-between rounded-[1px] bg-[#171717] px-[2px]">
            <select aria-label="Schriftart" className="h-[9px] w-[33px] appearance-none bg-transparent p-0 font-semibold text-[#eee]">
              <option>Calibri Ligh...</option>
            </select>
            <ChevronDown className="size-[4px] shrink-0 text-[#777]" />
          </span>
          <span className="ml-[2px] flex w-[20px] items-center justify-between rounded-[1px] bg-[#171717] px-[1px]">
            <select aria-label="Schriftgrad" className="h-[9px] w-[12px] appearance-none bg-transparent p-0 font-semibold text-[#eee]">
              <option>18</option>
            </select>
            <ChevronDown className="size-[4px] shrink-0 text-[#777]" />
          </span>
          <Tool label="Schrift vergrößern"><span className="text-[6px]">A</span><sup className="text-[3px] text-[#4f9be8]">^</sup></Tool>
          <Tool label="Schrift verkleinern"><span className="text-[5px]">A</span><sup className="text-[3px] text-[#4f9be8]">v</sup></Tool>
          <Divider />
          <Tool label="Groß-/Kleinschreibung" className="w-[15px]" menu>Aa</Tool>
          <Divider />
          <Tool label="Formatierung löschen" className="w-[12px]"><span className="text-[6px]">A</span><span className="size-[3px] rounded-full bg-[#a55bc8]" /></Tool>
        </div>
        <div className="flex items-center">
          <Tool label="Fett" className="w-[9px] rounded-[1px] bg-[#4a4a4a] font-bold">F</Tool>
          <Tool label="Kursiv" className="w-[10px] italic">K</Tool>
          <Tool label="Unterstrichen" className="w-[15px]" menu><u>U</u></Tool>
          <Tool label="Durchgestrichen"><s>ab</s></Tool>
          <Tool label="Tiefgestellt"><span>x</span><sub className="text-[3px] text-[#4f9be8]">2</sub></Tool>
          <Tool label="Hochgestellt"><span>x</span><sup className="text-[3px] text-[#4f9be8]">2</sup></Tool>
          <Divider />
          <Tool label="Texteffekte" className="w-[15px]" menu><span className="text-[7px] font-bold text-[#3f8fe0]">A</span></Tool>
          <Tool label="Hervorheben" className="w-[15px]" menu><PenLine className="size-[7px] border-b-2 border-[#d9d920]" /></Tool>
          <Tool label="Schriftfarbe" className="w-[15px]" menu><span className="border-b-2 border-[#d82828] text-[6px] leading-[6px]">A</span></Tool>
        </div>
      </div>
      <Divider className="h-[24px] bg-[#333]" />

      <div className="flex w-[106px] flex-col gap-[2px]">
        <div className="flex items-center">
          <Tool label="Aufzählung" className="w-[15px]" menu><List className="size-[7px] text-[#6fa6dc]" /></Tool>
          <Tool label="Nummerierung" className="w-[15px]" menu><ListOrdered className="size-[7px] text-[#6fa6dc]" /></Tool>
          <Tool label="Liste mit mehreren Ebenen" className="w-[15px]" menu><ListTree className="size-[7px] text-[#6fa6dc]" /></Tool>
          <Divider />
          <Tool label="Einzug verkleinern"><IndentDecrease className="size-[7px] text-[#6fa6dc]" /></Tool>
          <Tool label="Einzug vergrößern"><IndentIncrease className="size-[7px] text-[#6fa6dc]" /></Tool>
          <Divider />
          <Tool label="Sortieren"><ArrowDownAZ className="size-[7px] text-[#6fa6dc]" /></Tool>
          <Divider />
          <Tool label="Absatzmarken"><span className="text-[6px]">¶</span></Tool>
        </div>
        <div className="flex items-center">
          <Tool label="Linksbündig" className="w-[10px] rounded-[1px] bg-[#4a4a4a]"><AlignLeft className="size-[7px]" /></Tool>
          <Tool label="Zentriert"><AlignCenter className="size-[7px]" /></Tool>
          <Tool label="Rechtsbündig"><AlignRight className="size-[7px]" /></Tool>
          <Tool label="Blocksatz"><AlignJustify className="size-[7px]" /></Tool>
          <Divider />
          <Tool label="Zeilenabstand" className="w-[15px]" menu><ListOrdered className="size-[7px] text-[#6fa6dc]" /></Tool>
          <Divider />
          <Tool label="Schattierung" className="w-[15px]" menu><PaintBucket className="size-[7px]" /></Tool>
          <Tool label="Rahmen" className="w-[15px]" menu><Grid2X2 className="size-[7px]" /></Tool>
        </div>
      </div>
      <Divider className="h-[24px] bg-[#333]" />

      <div className="flex h-[23px] min-w-0 flex-1 items-center rounded-[2px] bg-[#434343] pl-[9px]">
        <div className="flex flex-1 justify-between">
          {STYLES.map((style, i) => (
            <button
              key={style.name}
              className={`flex h-[19px] w-[28px] flex-col items-center justify-between rounded-[1px] bg-[#a6a6a6] pb-[1px] ${i === 2 ? "outline outline-[#d0d0d0]" : ""}`}
            >
              <span className={`flex h-[11px] items-center whitespace-nowrap font-['Liberation_Sans',sans-serif] ${style.cls}`}>{style.sample}</span>
              <span className="whitespace-nowrap text-[4px] leading-[5px] text-[#222]">{style.name}</span>
            </button>
          ))}
        </div>
        <ChevronRight className="mx-[2px] size-[5px]" />
      </div>

      <div className="flex">
        <BigTool label="Bereich Formatvorlagen" className="w-[36px]">
          <svg viewBox="0 0 14 14" className="size-[13px] shrink-0" fill="none">
            <path d="M2 2H12V5M2 2V12H6" stroke="#a8a8a8" />
            <path d="M12.500 5 7 10.500 5.500 13 9 11.500 13 7" stroke="#4c96d8" />
            <path d="M9 13H13V9" stroke="#a8a8a8" />
          </svg>
        </BigTool>
        <Divider className="h-[23px] bg-[#333]" />
        <BigTool label="Diktieren" className="w-[22px]">
          <Mic className="size-[13px] shrink-0 fill-[#3f8bd8] text-[#3f8bd8]" />
        </BigTool>
        <Divider className="h-[23px] bg-[#333]" />
        <BigTool label="Add-Ins" className="w-[22px]">
          <svg viewBox="0 0 14 14" className="size-[13px] shrink-0" fill="none" stroke="#b34a24" strokeWidth="1.2">
            <path d="M1.500 1.500h5v5h-5zM7.500 1.500h5v5h-5zM1.500 7.500h5v5h-5zM7.500 7.500h5v5h-5z" />
          </svg>
        </BigTool>
        <Divider className="h-[23px] bg-[#333]" />
        <BigTool label="Editor" className="w-[20px]">
          <svg viewBox="0 0 14 14" className="size-[13px] shrink-0" fill="none" stroke="#3f8bd8">
            <path d="M9.500 1 12 2.500 5.500 12 3 13 3.200 10.200z" fill="#3f8bd8" />
            <path d="M2 6h3M1 9h2M10 7h3M8 10h4M7 13h4" />
          </svg>
        </BigTool>
      </div>
    </div>
  );
}

function OutlinePane() {
  return (
    <aside className="flex w-[83px] shrink-0 flex-col bg-[#232426] text-[5px] font-medium text-[#c8c8c8]">
      <div className="flex h-[14px] items-center gap-[7px] pl-[15px]">
        <Files className="size-[8px]" />
        <span className="flex h-full items-center bg-[#1b1b1c] px-[2px]"><List className="size-[8px]" /></span>
        <NotebookPen className="size-[8px]" />
        <Search className="size-[7px]" />
        <CircleX className="ml-auto mr-[3px] size-[5px] text-[#888]" />
      </div>
      <ul className="mt-[4px] flex min-h-0 flex-1 flex-col">
        {Array.from({ length: 77 }, (_, i) => {
          const item = OUTLINE[i];
          const bg = i === 12 ? "bg-[#464646]" : i % 2 ? "bg-[#1c1d1f]" : "bg-[#28292b]";
          return (
            <li key={i} className={`min-h-0 flex-1 overflow-hidden ${bg}`}>
              {item && (
                <button className={`flex h-full items-center gap-[1px] whitespace-nowrap ${LEVEL_PAD[item.level]}`}>
                  <span className="w-[4px]">
                    {item.open && <ChevronDown className="size-[4px]" />}
                    {item.closed && <ChevronRight className="size-[4px]" />}
                  </span>
                  {item.label}
                </button>
              )}
            </li>
          );
        })}
      </ul>
    </aside>
  );
}

function DocumentArea() {
  return (
    <main className="flex min-w-0 flex-1 flex-col bg-[#272727]">
      <div className="flex h-[7px] shrink-0 justify-end border-b border-[#555] bg-[#434343] pr-[61px]">
        <div className="flex w-[29px] items-center bg-[#272727] px-[2px]">
          <span className="size-[4px] bg-white" />
          <span className="flex-1 border-t border-dotted border-[#888]" />
          <span className="size-[3px] bg-white" />
        </div>
      </div>
      <div className="grid min-h-0 flex-1 grid-cols-17 grid-rows-12 gap-[2px] pb-[3px] pl-[21px] pr-[25px] pt-[6px]">
        {PAGE_ROWS.map((row, r) =>
          row.slice(0, 17).map((spec, c) => (
            <div key={`${r}-${c}`} className={`min-h-0 min-w-0 ${r === 11 && c === 0 ? "col-start-3" : ""}`}>
              <PageThumb spec={spec} index={r * 17 + c} />
            </div>
          )),
        )}
      </div>
      <div className="h-[7px] shrink-0 border-t border-[#3c3c3c] bg-[#303030]" />
    </main>
  );
}

function WordStatusBar() {
  return (
    <footer className="flex h-[9px] shrink-0 items-center border-t border-[#555] bg-[#3a3a3a] pl-[9px] pr-[11px] text-[5px] text-[#c6c6c6]">
      <span className="w-[48px]">Seite 152 von 200</span>
      <span className="w-[38px]">47157 Wörter</span>
      <BookOpen className="mr-[7px] size-[6px]" />
      <span className="w-[58px] whitespace-nowrap">Deutsch (Deutschland)</span>
      <PersonStanding className="mr-[1px] size-[6px]" />
      <span>Barrierefreiheit: Untersuchen</span>
      <div className="ml-auto flex items-center">
        <Maximize className="mr-[3px] size-[6px]" />
        <span>Fokus</span>
        <button aria-label="Drucklayout" className="ml-[5px] flex h-[8px] w-[13px] items-center justify-center bg-[#575757]"><FileText className="size-[6px]" /></button>
        <button aria-label="Weblayout" className="flex w-[14px] justify-center"><Globe className="size-[6px]" /></button>
        <button aria-label="Gliederung" className="flex w-[14px] justify-center text-[#888]"><ListTree className="size-[6px]" /></button>
        <button aria-label="Entwurf" className="flex w-[14px] justify-center text-[#888]"><AlignLeft className="size-[6px]" /></button>
        <Minus className="mx-[2px] size-[5px]" />
        <input
          type="range"
          aria-label="Zoom"
          min={10}
          max={100}
          defaultValue={20}
          className="h-px w-[38px] appearance-none bg-[#888] [&::-webkit-slider-thumb]:size-[6px] [&::-webkit-slider-thumb]:appearance-none [&::-webkit-slider-thumb]:rounded-full [&::-webkit-slider-thumb]:bg-[#aaa]"
        />
        <Plus className="mx-[2px] size-[5px]" />
        <span className="ml-[6px]">14 %</span>
      </div>
    </footer>
  );
}

function WordWindow() {
  return (
    <section className="flex w-[48%] min-w-0 flex-col overflow-hidden rounded-md bg-[#1d1d1d]">
      <WordTitleBar />
      <RibbonTabs />
      <Ribbon />
      <div className="flex min-h-0 flex-1">
        <OutlinePane />
        <div className="flex w-[7px] shrink-0 justify-center bg-[#3c3c3c]">
          <span className="w-px bg-[#5a5a5a]" />
        </div>
        <DocumentArea />
      </div>
      <WordStatusBar />
    </section>
  );
}

/* ---------- draw.io ---------- */

const MENUS = ["Datei", "Bearbeiten", "Ansicht", "Anordnen", "Extras", "Hilfe"];
const PAGES = ["Logo", "Einleitung", "Der Prozess", "Vorgehen", "Teilnehmende", "Tools", "Dokumente", "Blog&Webseite"];

function DrawToolbar() {
  const line = "h-[9px] bg-[#dcdddf]";
  return (
    <div className="flex h-[16px] shrink-0 items-center border-b border-t border-[#e3e5e7] pl-[4px] text-[6px] text-[#333]">
      <Tool label="Ansicht" className="w-[15px]" menu><PanelLeft className="size-[8px]" /></Tool>
      <Divider className={line} />
      <div className="flex w-[25px] items-center justify-between pl-[3px]">
        <select aria-label="Zoom" className="w-[15px] appearance-none bg-transparent p-0">
          <option>23%</option>
        </select>
        <ChevronDown className="size-[4px] text-[#777]" />
      </div>
      <Divider className={line} />
      <Tool label="Vergrößern" className="w-[12px]"><ZoomIn className="size-[7px]" /></Tool>
      <Tool label="Verkleinern" className="w-[12px]"><ZoomOut className="size-[7px]" /></Tool>
      <Divider className={line} />
      <Tool label="Rückgängig" className="w-[12px]"><Undo2 className="size-[7px]" /></Tool>
      <Tool label="Wiederholen" className="w-[12px] text-[#bbb]"><Redo2 className="size-[7px]" /></Tool>
      <Divider className={line} />
      <Tool label="Löschen" className="w-[12px] text-[#aaa]"><Trash2 className="size-[7px]" /></Tool>
      <Divider className={line} />
      <Tool label="Nach vorne" className="w-[12px] text-[#aaa]"><Copy className="size-[7px]" /></Tool>
      <Tool label="Nach hinten" className="w-[12px] text-[#aaa]"><Copy className="size-[7px]" /></Tool>
      <Divider className={line} />
      <Tool label="Füllfarbe" className="w-[12px] text-[#aaa]"><PaintBucket className="size-[7px]" /></Tool>
      <Tool label="Linienfarbe" className="w-[12px] text-[#aaa]"><PenLine className="size-[7px]" /></Tool>
      <Tool label="Schatten" className="w-[12px] text-[#aaa]"><Square className="size-[6px]" /></Tool>
      <Divider className={line} />
      <Tool label="Verbindung" className="w-[15px]" menu><MoveRight className="size-[7px]" /></Tool>
      <Tool label="Wegpunkte" className="w-[18px]" menu>
        <svg viewBox="0 0 8 8" className="size-[7px]" fill="none" stroke="currentColor"><path d="M0 6.500h2M2 6h3V2h3M6.500.8 8 2 6.500 3.200" strokeWidth=".8" /></svg>
      </Tool>
      <Divider className={line} />
      <Tool label="Einfügen" className="w-[18px]" menu><Plus className="size-[8px] text-black" strokeWidth={4.5} /></Tool>
      <Divider className={line} />
      <Tool label="Tabelle" className="w-[16px] text-[#777]" menu><Table className="size-[7px]" /></Tool>
      <div className="ml-auto mr-[6px] flex gap-[3px] text-[#444]">
        <button aria-label="Vollbild"><Maximize className="size-[5px]" /></button>
        <button aria-label="Format"><PanelRight className="size-[5px]" /></button>
        <button aria-label="Einklappen"><ChevronsDown className="size-[5px]" strokeWidth={3} /></button>
      </div>
    </div>
  );
}

function DrawWindow() {
  return (
    <section className="flex min-w-0 flex-1 flex-col overflow-hidden rounded-md bg-[#f1f3f5] font-['Liberation_Sans',sans-serif] text-[#222]">
      <div className="flex h-[12px] shrink-0 items-center border-b border-[#3c3c3c] bg-[#232425]">
        <Lights className="w-[40px] pl-[3px]" />
        <span className="flex-1 pr-[40px] text-center text-[6px] text-[#777]">Buch2024_v2.drawio - draw.io</span>
      </div>
      <div className="flex h-[11px] shrink-0 items-center pl-[4px] text-[6px]">
        <nav className="flex gap-[6px]">
          {MENUS.map((menu) => (
            <button key={menu}>{menu}</button>
          ))}
        </nav>
        <button className="ml-[6px] flex h-[10px] items-center gap-[2px] rounded-[1px] bg-[#f4c7c9] px-[4px] text-[5px] text-[#c22d35]">
          Unsaved changes. Click here to save. (Last saved 9 minutes ago)
          <Download className="size-[6px] text-[#333]" />
        </button>
        <Sun className="ml-auto mr-[4px] size-[6px] text-[#555]" />
      </div>
      <DrawToolbar />
      <div className="relative min-h-0 flex-1 overflow-hidden bg-white">
        <svg viewBox="0 0 780 603" className="h-[603px] w-[780px] max-w-none" fill="none">
          {DIAGRAMS.map((diagram, i) => (
            <DiagramSheet key={i} diagram={diagram} />
          ))}
        </svg>
        <div className="absolute inset-y-0 left-0 w-[12px] bg-gradient-to-r from-[#d2d2d2] to-transparent" />
        <div className="absolute bottom-0 left-1/2 h-[2px] w-1/4 bg-[#dcdcdc]" />
      </div>
      <div className="flex h-[15px] shrink-0 items-center border-t border-[#e0e2e4] text-[5px] text-[#333]">
        <button aria-label="Seiten" className="w-[11px]"><EllipsisVertical className="mx-auto size-[8px]" /></button>
        {PAGES.map((page) => (
          <button
            key={page}
            className={`flex h-full items-center gap-[2px] border-l border-[#dfe1e3] px-[5px] ${page === "Vorgehen" ? "bg-white" : ""}`}
          >
            {page}
            {page === "Vorgehen" && <ChevronUp className="size-[4px]" strokeWidth={3} />}
          </button>
        ))}
        <button aria-label="Seite hinzufügen" className="flex h-full items-center border-l border-[#dfe1e3] px-[2px]"><Plus className="size-[8px]" /></button>
      </div>
    </section>
  );
}

export default function App() {
  return (
    <div className="flex h-screen gap-px bg-black pb-px font-[Inter,sans-serif]">
      <WordWindow />
      <DrawWindow />
    </div>
  );
}
